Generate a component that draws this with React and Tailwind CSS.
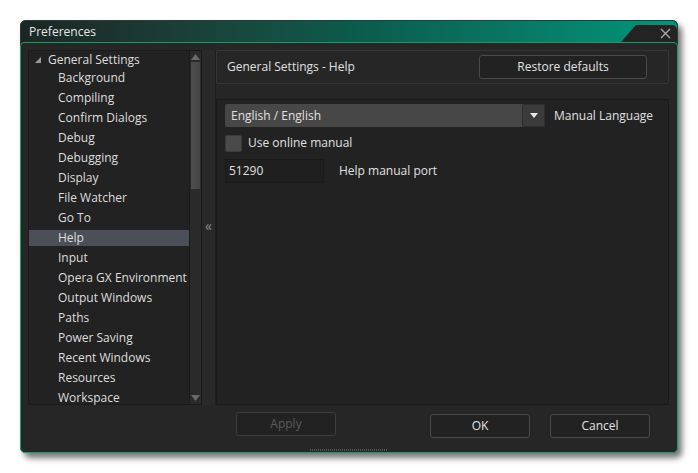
import React from "react";

const items = [
  "Background",
  "Compiling",
  "Confirm Dialogs",
  "Debug",
  "Debugging",
  "Display",
  "File Watcher",
  "Go To",
  "Help",
  "Input",
  "Opera GX Environment",
  "Output Windows",
  "Paths",
  "Power Saving",
  "Recent Windows",
  "Resources",
  "Workspace",
];

const Button = ({ children, disabled }) => (
  <button
    className={
      "h-[24px] w-[100px] rounded-[3px] border bg-[#222222] text-[12px] " +
      (disabled ? "text-[#5c5c5c] border-[#3e3e3e]" : "text-[#e2e2e2] border-[#4a4a4a]")
    }
  >
    {children}
  </button>
);

export default function App() {
  return (
    <div
      className="w-[698px] h-[473px] bg-white pt-[20px] pl-[20px] overflow-hidden"
      style={{ fontFamily: "'Open Sans', 'Noto Sans', sans-serif" }}
    >
      <div className="w-[658px] h-[433px] flex flex-col rounded-[6px] bg-[#262626] shadow-[4px_5px_6px_rgba(0,0,0,0.55)]">
        {/* Title bar */}
        <div className="h-[22px] flex items-stretch rounded-t-[6px] border border-b-0 border-[#2f3a38] bg-gradient-to-r from-[#1b2624] via-[#0b5a4b] to-[#00957b]">
          <div className="flex-1 flex items-center pl-[8px] text-[12px] text-[#e6e6e6]">
            Preferences
          </div>
          <div className="mt-[4px] w-[56px] flex items-center justify-end pr-[6px] bg-[#232323] rounded-tr-[5px] [clip-path:polygon(15px_0,100%_0,100%_100%,0_100%)]">
            <svg width="11" height="11" viewBox="0 0 11 11">
              <path d="M1 1L10 10M10 1L1 10" stroke="#a8a8a8" strokeWidth="1.4" />
            </svg>
          </div>
        </div>

        {/* Body */}
        <div className="flex-1 flex flex-col rounded-b-[5px] rounded-t-[4px] border border-[#10a06a] bg-[#262626]">
          <div className="flex pt-[7px] pl-[7px]">
            {/* Tree */}
            <div className="w-[174px] h-[355px] flex border border-[#1a1a1a] bg-[#222222]">
              <div className="flex-1 flex flex-col text-[12px] text-[#dedede]">
                <div className="h-[17px] shrink-0 flex items-center pl-[5px]">
                  <svg width="8" height="8" viewBox="0 0 8 8" className="mr-[6px]">
                    <path d="M7 1L7 7L1 7Z" fill="#9a9a9a" />
                  </svg>
                  General Settings
                </div>
                {items.map((it) => (
                  <div key={it} className="h-[20px] shrink-0 flex items-center">
                    <div
                      className={
                        "w-full h-[16px] flex items-center pl-[29px] leading-[12px] " +
                        (it === "Help" ? "bg-[#4b5058]" : "")
                      }
                    >
                      {it}
                    </div>
                  </div>
                ))}
              </div>
              {/* Scrollbar */}
              <div className="w-[12px] shrink-0 flex flex-col items-center border-l border-[#1a1a1a] bg-[#2a2a2a]">
                <svg width="9" height="6" viewBox="0 0 9 6" className="mt-[3px]">
                  <path d="M4.5 0L9 6L0 6Z" fill="#6a6a6a" />
                </svg>
                <div className="mt-[2px] w-[9px] h-[127px] bg-gradient-to-r from-[#4e4e4e] to-[#444444]" />
                <div className="flex-1" />
                <svg width="9" height="6" viewBox="0 0 9 6" className="mb-[3px]">
                  <path d="M0 0L9 0L4.5 6Z" fill="#6a6a6a" />
                </svg>
              </div>
            </div>

            {/* Splitter */}
            <div className="w-[14px] h-[355px] flex items-center justify-center bg-[#292929] border-r border-[#1e1e1e]">
              <span className="text-[14px] text-[#8a8a8a] leading-none -mt-[3px]">«</span>
            </div>

            {/* Right column */}
            <div className="w-[453px] h-[355px] flex flex-col">
              <div className="h-[34px] shrink-0 flex items-center justify-between pl-[10px] pr-[21px] border border-[#363636] bg-[#262626] rounded-[2px]">
                <span className="text-[12px] text-[#e0e0e0]">General Settings - Help</span>
                <button className="h-[24px] w-[168px] rounded-[3px] border border-[#4a4a4a] bg-[#222222] text-[12px] text-[#e2e2e2]">
                  Restore defaults
                </button>
              </div>

              <div className="mt-[15px] flex-1 flex flex-col border border-[#1a1a1a] bg-[#222222] pl-[8px] pt-[4px] text-[12px] text-[#e0e0e0]">
                <div className="flex items-center">
                  <div className="w-[320px] h-[23px] flex rounded-[2px] bg-[#474747]">
                    <div className="flex-1 flex items-center pl-[6px]">English / English</div>
                    <div className="w-[23px] flex items-center justify-center rounded-[2px] border border-[#2e2e2e] bg-[#3b3b3b]">
                      <svg width="8" height="5" viewBox="0 0 8 5">
                        <path d="M0 0L8 0L4 5Z" fill="#e6e6e6" />
                      </svg>
                    </div>
                  </div>
                  <span className="ml-[9px]">Manual Language</span>
                </div>

                <div className="mt-[7px] flex items-center">
                  <div className="w-[17px] h-[17px] rounded-[2px] border border-[#3a3a3a] bg-[#4a4a4a]" />
                  <span className="ml-[6px]">Use online manual</span>
                </div>

                <div className="mt-[7px] flex items-center">
                  <div className="w-[99px] h-[24px] flex items-center pl-[3px] border border-[#1a1a1a] bg-[#1f1f1f]">
                    51290
                  </div>
                  <span className="ml-[15px]">Help manual port</span>
                </div>
              </div>
            </div>
          </div>

          {/* Buttons */}
          <div className="mt-[7px] flex pl-[215px]">
            <Button disabled>Apply</Button>
            <div className="ml-[94px]">
              <Button>OK</Button>
            </div>
            <div className="ml-[20px]">
              <Button>Cancel</Button>
            </div>
          </div>

          <div className="mt-auto mb-[1px] mx-auto w-[78px] h-[2px] bg-[repeating-linear-gradient(90deg,#555_0,#555_1px,transparent_1px,transparent_2px)]" />
        </div>
      </div>
    </div>
  );
}
